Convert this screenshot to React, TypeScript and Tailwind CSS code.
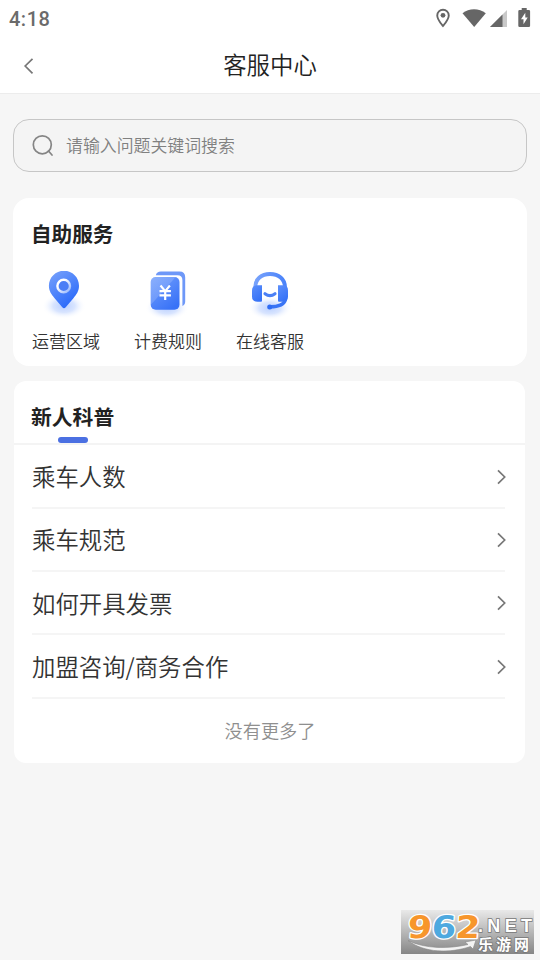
const topics = ["乘车人数", "乘车规范", "如何开具发票", "加盟咨询/商务合作"];

function StatusBar() {
  return (
    <div className="flex h-9 items-center justify-between pl-[9px] pr-[9px] text-[#6b6b6b]">
      <span className="pt-[2px] font-['Roboto',sans-serif] text-[20px] font-medium leading-none tracking-[0.5px]">
        4:18
      </span>
      <svg width="96" height="24" viewBox="0 0 96 24" fill="#666">
        <path
          fillRule="evenodd"
          d="M8 2.800a6.700 6.700 0 0 0-6.700 6.700c0 4.700 6.700 11.900 6.700 11.900s6.700-7.200 6.700-11.900A6.700 6.700 0 0 0 8 2.800Zm0 1.900a4.800 4.800 0 0 1 4.800 4.800c0 2.700-2.700 6.600-4.800 9.100-2.100-2.500-4.800-6.400-4.800-9.100A4.800 4.800 0 0 1 8 4.700Z"
        />
        <circle cx="8" cy="9.300" r="2.400" />
        <path d="M27.500 7.200C34 1.900 44 1.900 50.800 7.200L39.200 21Z" />
        <path d="M72 4v17H55Z" fill="#c9c9c9" />
        <path d="M67.500 8.500v12.500H55Z" />
        <path
          fillRule="evenodd"
          d="M86.700 2h5v2h2.100a1.300 1.300 0 0 1 1.300 1.300v14.500a1.300 1.300 0 0 1-1.300 1.300h-9.200a1.300 1.300 0 0 1-1.300-1.300V5.300A1.300 1.300 0 0 1 84.600 4h2.100ZM90.300 6.800l-4.300 6.500h2.500v5l4.200-6.700h-2.400Z"
        />
      </svg>
    </div>
  );
}

function RegionIcon() {
  return (
    <svg width="60" height="60" viewBox="0 0 60 60">
      <defs>
        <linearGradient id="pin" x1="0" y1="0" x2="0.6" y2="1">
          <stop offset="0" stopColor="#7aa3fb" />
          <stop offset="1" stopColor="#2a6afa" />
        </linearGradient>
        <linearGradient id="ring" x1="0" y1="0" x2="1" y2="1">
          <stop offset="0.3" stopColor="#fff" />
          <stop offset="1" stopColor="#8eb2fd" />
        </linearGradient>
        <radialGradient id="glow">
          <stop offset="0" stopColor="#bcd1ff" />
          <stop offset="0.5" stopColor="#d9e5ff" />
          <stop offset="1" stopColor="#fff" stopOpacity="0" />
        </radialGradient>
      </defs>
      <ellipse cx="30" cy="46" rx="22" ry="13" fill="url(#glow)" />
      <path
        d="M30 10.800c-8.500 0-15.100 6.700-15.100 15 0 5.300 2.700 8.900 5.700 12.400l7.700 9q1.700 1.900 3.400 0l7.700-9c3-3.500 5.600-7.100 5.600-12.400 0-8.300-6.500-15-15-15Z"
        fill="url(#pin)"
      />
      <circle cx="29.700" cy="26" r="6.300" fill="#4b7ef6" stroke="url(#ring)" strokeWidth="2.400" />
    </svg>
  );
}

function PricingIcon() {
  return (
    <svg width="60" height="60" viewBox="0 0 60 60">
      <defs>
        <linearGradient id="sheet" x1="0" y1="0" x2="0.7" y2="1">
          <stop offset="0" stopColor="#75a1fd" />
          <stop offset="1" stopColor="#3872f7" />
        </linearGradient>
        <linearGradient id="shine" x1="0" y1="0" x2="1" y2="1">
          <stop offset="0.5" stopColor="#fff" stopOpacity="0.16" />
          <stop offset="0.51" stopColor="#fff" stopOpacity="0" />
        </linearGradient>
      </defs>
      <ellipse cx="28" cy="48" rx="22" ry="12" fill="url(#glow)" />
      <path
        d="M16.800 15.200q1-3.700 5-3.700h18.700q5.700 0 5.700 5.700v24.300q0 3.300-2.800 4.400V20.200q0-5-5-5Z"
        fill="#6e98f8"
      />
      <rect x="11.700" y="17" width="28.800" height="32.800" rx="5" fill="url(#sheet)" />
      <path d="M16.700 17h20L11.700 45V22a5 5 0 0 1 5-5Z" fill="url(#shine)" />
      <path
        d="M21.500 25.500l4.700 5.600 4.700-5.600M20.500 31.200h11.400M20.500 35.300h11.400M26.200 31v9"
        fill="none"
        stroke="#fff"
        strokeWidth="2.200"
      />
    </svg>
  );
}

function SupportIcon() {
  return (
    <svg width="60" height="60" viewBox="0 0 60 60">
      <defs>
        <linearGradient id="band" x1="0" y1="0" x2="1" y2="0">
          <stop offset="0" stopColor="#78a2fb" />
          <stop offset="1" stopColor="#4a83fa" />
        </linearGradient>
        <linearGradient id="cup" x1="0" y1="0" x2="0.5" y2="1">
          <stop offset="0" stopColor="#5c8ffb" />
          <stop offset="1" stopColor="#3773f7" />
        </linearGradient>
      </defs>
      <ellipse cx="30" cy="48" rx="22" ry="12" fill="url(#glow)" />
      <path d="M15.200 27.500C15.200 18.700 21.500 14 30 14s15 4.700 15 13.500" fill="none" stroke="url(#band)" strokeWidth="4" />
      <path d="M22 25.300v15.500q0 1-1 1h-3.500q-5.500 0-5.500-5v-6.500q0-5 5.500-5Z" fill="url(#cup)" />
      <path d="M38 25.300h4.700q5.300 0 5.300 5v6.500q0 5-5.300 5H39q-1 0-1-1Z" fill="url(#cup)" />
      <path d="M25 33.700q5 3.800 10 0" fill="none" stroke="#4b80f5" strokeWidth="3.200" strokeLinecap="round" />
      <path d="M45.500 39.500c-1.500 5.500-7 7.300-15.500 7.300" fill="none" stroke="#3974f5" strokeWidth="3.400" />
      <circle cx="29.700" cy="47" r="2.500" fill="#2f6cf4" />
    </svg>
  );
}

const services = [
  { label: "运营区域", Icon: RegionIcon, pad: "pr-[4px]" },
  { label: "计费规则", Icon: PricingIcon, pad: "pl-[1px]" },
  { label: "在线客服", Icon: SupportIcon, pad: "pr-[1px]" },
];

function Watermark() {
  return (
    <svg className="absolute bottom-[6px] right-[6px] overflow-visible" width="133" height="44" viewBox="0 0 133 44">
      <defs>
        <linearGradient id="plate" x1="0" y1="0" x2="0" y2="1">
          <stop offset="0" stopColor="#e9e9e9" />
          <stop offset="1" stopColor="#868686" />
        </linearGradient>
      </defs>
      <rect width="133" height="44" fill="url(#plate)" />
      <path d="M7 30.500C24 39 48 39 67 34.500l-3-2.500 11-2-3 9-2.500-2.500C49 43.500 23 43 7 30.500Z" fill="#f3f3f3" stroke="#888" strokeWidth="0.600" />
      <g
        transform="translate(5 27.500) skewX(-4)"
        fontFamily="'DejaVu Sans', sans-serif"
        fontWeight="700"
        fontSize="31"
        stroke="#fff"
        strokeWidth="2.500"
        strokeLinejoin="round"
        paintOrder="stroke"
      >
        <text x="1" y="0" fill="#f7962c" textLength="24.500" lengthAdjust="spacingAndGlyphs">9</text>
        <text x="25" y="0" fill="#4ea9df" textLength="24.500" lengthAdjust="spacingAndGlyphs">6</text>
        <text x="49" y="0" fill="#f7962c" textLength="24.500" lengthAdjust="spacingAndGlyphs">2</text>
      </g>
      <g fill="#fff" stroke="#777" strokeWidth="1.500" paintOrder="stroke" fontWeight="700">
        <text x="77" y="21.500" fontSize="18" fontFamily="'Liberation Sans', sans-serif" textLength="54" lengthAdjust="spacing">.NET</text>
        <text x="77" y="39.500" fontSize="15" fontFamily="'Noto Sans CJK SC', sans-serif" textLength="51">乐游网</text>
      </g>
    </svg>
  );
}

export default function App() {
  return (
    <div className="relative h-[960px] w-[540px] overflow-hidden bg-[#f6f6f6] font-['Noto_Sans_CJK_SC',sans-serif] font-[350] text-[#333]">
      <header className="h-[94px] border-b border-[#ececec] bg-white">
        <StatusBar />
        <div className="grid h-[57px] grid-cols-[60px_1fr_60px] items-center">
          <svg className="ml-[22px] mt-[2px]" width="14" height="18" viewBox="0 0 14 18" fill="none" stroke="#777" strokeWidth="1.700">
            <path d="M10.500 1.800 3.200 9l7.300 7.300" />
          </svg>
          <h1 className="text-center text-[23.400px] leading-none text-[#222]">客服中心</h1>
        </div>
      </header>

      <main className="px-[13px] pt-[25px]">
        <div className="flex h-[53px] items-center rounded-[16px] border-[1.500px] border-[#c6c6c6] bg-[#f4f4f4] pl-[18px]">
          <svg width="24" height="24" viewBox="0 0 24 24" fill="none" stroke="#858585" strokeWidth="1.700">
            <circle cx="10.300" cy="10.800" r="9" />
            <path d="m16.500 17 3.500 4" strokeLinecap="round" />
          </svg>
          <span className="ml-[10px] text-[16.900px] leading-none text-[#808080]">请输入问题关键词搜索</span>
        </div>

        <section className="mt-[26px] h-[168px] rounded-[16px] bg-white px-[19px] pt-[25px]">
          <h2 className="-ml-px text-[20.600px] font-bold leading-[21px] text-[#222]">自助服务</h2>
          <div className="mt-[16px] flex gap-[34px]">
            {services.map(({ label, Icon, pad }) => (
              <div key={label} className="flex w-[68px] flex-col items-center">
                <div className={pad}>
                  <Icon />
                </div>
                <span className="mt-[12px] whitespace-nowrap text-[17px] leading-[17px]">{label}</span>
              </div>
            ))}
          </div>
        </section>

        <section className="ml-px mr-[2px] mt-[15px] h-[382px] rounded-[12px] bg-white">
          <div className="flex h-[64px] flex-col border-b-2 border-[#f4f4f4] pl-[17px] pt-[25px]">
            <h2 className="text-[20.800px] font-bold leading-[21px] text-[#222]">新人科普</h2>
            <div className="ml-[27px] mt-[10px] h-[6px] w-[30px] rounded-full bg-[#4b70e2]" />
          </div>
          <ul className="pl-[18px] pr-[20px] pt-[0.500px]">
            {topics.map((topic) => (
              <li
                key={topic}
                className="flex h-[63.300px] items-center justify-between border-b-2 border-[#f5f5f5] pt-[1.500px] text-[23.400px] leading-none"
              >
                {topic}
                <svg className="mr-[-3px]" width="12" height="18" viewBox="0 0 12 18" fill="none" stroke="#777" strokeWidth="1.700">
                  <path d="M2 2.300 8.700 9 2 15.700" />
                </svg>
              </li>
            ))}
          </ul>
          <p className="mt-[21px] pl-px text-center text-[18.200px] leading-[20px] text-[#8f8f8f]">没有更多了</p>
        </section>
      </main>

      <Watermark />
    </div>
  );
}
